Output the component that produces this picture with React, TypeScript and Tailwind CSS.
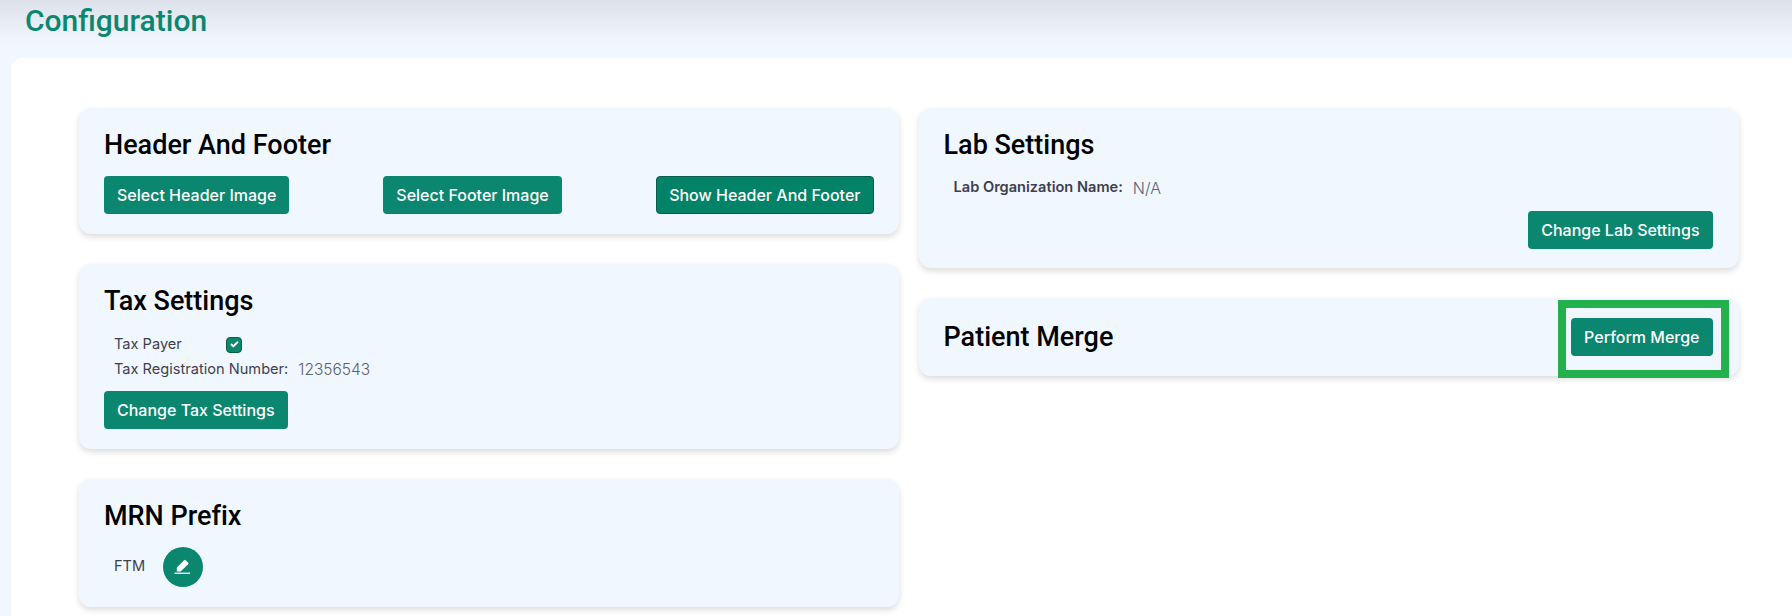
import { Check } from "lucide-react";

function Btn({ children, className = "" }: { children: React.ReactNode; className?: string }) {
  return (
    <button className={`h-[38px] rounded-[4px] bg-[#0b8770] px-[13px] text-[16px] font-medium text-white whitespace-nowrap ${className}`}>
      {children}
    </button>
  );
}

function Title({ children }: { children: React.ReactNode }) {
  return <h2 className="font-['Roboto'] text-[27px] font-medium leading-[30px] text-black [font-variant-ligatures:none]">{children}</h2>;
}

const cardClass = "rounded-[12px] bg-[#f1f7ff] shadow-[0_3px_6px_rgba(0,0,0,0.14)]";

export default function App() {
  return (
    <div className="relative h-[616px] w-[1792px] overflow-hidden bg-[#f1f7ff] font-['Inter',sans-serif]">
      {/* Page heading */}
      <div className="h-[58px] bg-gradient-to-b from-[#dde1ea] to-[#f1f7ff] to-[75%] pl-[25px] pt-[3px]">
        <h1 className="font-['Roboto'] text-[30px] font-medium leading-[36px] text-[#0b8770]">Configuration</h1>
      </div>

      <div className="ml-[11px] h-[558px] rounded-tl-[10px] bg-white pl-[68px] pt-[50px]">
        <div className="flex gap-[19.5px]">
          {/* Left column */}
          <div className="flex w-[820px] flex-col gap-[30px]">
            <section className={`${cardClass} h-[126px] px-[25px] pt-[22px]`}>
              <Title>Header And Footer</Title>
              <div className="mt-[16px] flex justify-between">
                <Btn>Select Header Image</Btn>
                <Btn>Select Footer Image</Btn>
                <Btn className="border border-[#0c5c4d] bg-[#028266] !px-[12.5px]">Show Header And Footer</Btn>
              </div>
            </section>

            <section className={`${cardClass} h-[185px] px-[25px] pt-[22px]`}>
              <Title>Tax Settings</Title>
              <div className="mt-[16px] pl-[10px] text-[14.6px] leading-[25px] text-[#3f3f4f]">
                <div className="flex items-center">
                  <span className="w-[112px]">Tax Payer</span>
                  <span className="flex h-[16px] w-[16px] items-center justify-center rounded-[4px] border border-[#0c5c4d] bg-[#0b8770]">
                    <Check size={9} strokeWidth={5} className="text-white" />
                  </span>
                </div>
                <div className="flex items-center">
                  <span>Tax Registration Number:</span>
                  <span className="ml-[10px] text-[15.5px] font-light text-[#5b6270]">12356543</span>
                </div>
              </div>
              <Btn className="mt-[9px]">Change Tax Settings</Btn>
            </section>

            <section className={`${cardClass} h-[128px] px-[25px] pt-[22px]`}>
              <Title>MRN Prefix</Title>
              <div className="mt-[16px] flex items-center pl-[10px] text-[14.6px] text-[#3f3f4f]">
                <span>FTM</span>
                <span className="ml-[18px] flex h-[40px] w-[40px] items-center justify-center rounded-full bg-[#0b8770]">
                  <svg width="18" height="18" viewBox="0 0 18 18" fill="white">
                    <path d="M2.8 9.6 10.2 2.2a1 1 0 0 1 1.4 0l2.6 2.6a1 1 0 0 1 0 1.4L6.6 13.4H2.8z" />
                    <rect x="0.5" y="14.6" width="15.5" height="1.3" />
                  </svg>
                </span>
              </div>
            </section>
          </div>

          {/* Right column */}
          <div className="flex w-[820px] flex-col gap-[30px]">
            <section className={`${cardClass} h-[160px] pl-[25px] pr-[26px] pt-[22px]`}>
              <Title>Lab Settings</Title>
              <div className="mt-[16px] flex items-center pl-[10px] text-[14.6px]">
                <span className="font-semibold text-[#3f3f4f]">Lab Organization Name:</span>
                <span className="ml-[10px] text-[16px] font-light text-[#5b6270]">N/A</span>
              </div>
              <div className="mt-[11px] flex justify-end">
                <Btn>Change Lab Settings</Btn>
              </div>
            </section>

            <section className={`${cardClass} flex h-[78px] items-center justify-between pl-[25px] pr-[26px]`}>
              <Title>Patient Merge</Title>
              <Btn>Perform Merge</Btn>
            </section>
          </div>
        </div>
      </div>

      {/* Highlight drawn over the merge button */}
      <div className="absolute left-[1558px] top-[300px] h-[78px] w-[171px] border-[8px] border-[#22b14c]" />
    </div>
  );
}
